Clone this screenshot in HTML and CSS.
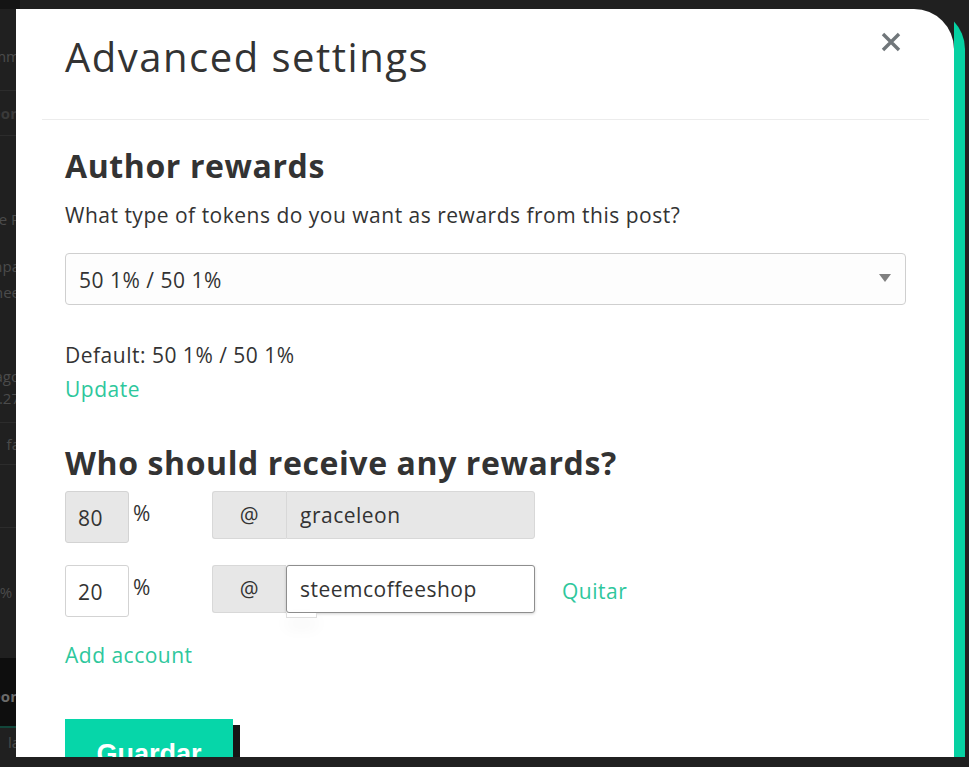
FILE: index.html
```html
<!DOCTYPE html>
<html lang="en">

<head>
    <meta charset="UTF-8">
    <meta name="viewport" content="width=device-width, initial-scale=1.0">
    <title>Advanced settings</title>
    <link rel="stylesheet" href="styles.css">
</head>

<body>
    <!-- page behind the modal, only a sliver of it shows on the left -->
    <div class="page">
        <div class="page-top"></div>
        <div class="page-row row-a"><span>Comm</span></div>
        <div class="page-row row-b"><span class="strong">Don</span></div>
        <div class="page-row row-c">
            <span class="l1">the P</span>
            <span class="l2">compa</span>
            <span class="l3">steemee</span>
            <span class="l4">ago</span>
            <span class="l5">1.27</span>
        </div>
        <div class="page-row row-d"><span>fa</span></div>
        <div class="page-row row-e"></div>
        <div class="page-row row-f"><span>50% ,</span></div>
        <div class="page-row row-g"><span class="strong">Don</span></div>
        <div class="page-row row-h"><span>la</span></div>
    </div>

    <div class="overlay">
        <div class="modal">
            <button class="close-btn" aria-label="Close">
                <svg width="22" height="20" viewBox="0 0 22 20">
                    <path d="M3 2 L19 18 M19 2 L3 18" stroke="#70767a" stroke-width="3.4" fill="none" />
                </svg>
            </button>

            <div class="modal-header">
                <h1>Advanced settings</h1>
            </div>

            <div class="modal-body">
                <h2>Author rewards</h2>
                <p class="hint">What type of tokens do you want as rewards from this post?</p>

                <div class="select-wrap">
                    <select class="payout-select">
                        <option>50 1% / 50 1%</option>
                    </select>
                </div>

                <p class="default-line">Default: 50 1% / 50 1%</p>
                <a href="#" class="link update-link">Update</a>

                <h2 class="beneficiaries-title">Who should receive any rewards?</h2>

                <div class="beneficiary-row">
                    <div class="percent-cell">
                        <input class="percent-input" type="text" value="80" disabled>
                        <span class="percent-sign">%</span>
                    </div>
                    <div class="account-group">
                        <span class="addon">@</span>
                        <input class="account-input" type="text" value="graceleon" disabled>
                    </div>
                </div>

                <div class="beneficiary-row">
                    <div class="percent-cell">
                        <input class="percent-input" type="text" value="20">
                        <span class="percent-sign">%</span>
                    </div>
                    <div class="account-group">
                        <span class="addon">@</span>
                        <input class="account-input focused" type="text" value="steemcoffeeshop">
                        <span class="suggest-stub"></span>
                    </div>
                    <a href="#" class="link remove-link">Quitar</a>
                </div>

                <a href="#" class="link add-link">Add account</a>

                <button class="save-btn">Guardar</button>
            </div>
        </div>
    </div>
</body>

</html>
```

FILE: styles.css
```css
body {
    margin: 0;
    height: 767px;
    overflow: hidden;
    background: #202020;
    font-family: "Open Sans", "Noto Sans", sans-serif;
    color: #333;
}

/* page behind */
.page {
    width: 20px;
    color: #4b4b4b;
    font-size: 15px;
    line-height: 18px;
}

.page-top {
    height: 9px;
    background: #141414;
}

.page-row {
    display: flex;
    flex-direction: column;
    align-items: flex-end;
    white-space: nowrap;
    border-bottom: 1px solid #2c2c2c;
    box-sizing: border-box;
}

.page-row .strong {
    font-weight: bold;
    color: #3a3a3a;
}

.row-a {
    height: 82px;
    padding-top: 38px;
}

.row-b {
    height: 45px;
    padding-top: 13px;
}

.row-c {
    height: 287px;
    padding-top: 74px;
}

.row-c .l2 {
    margin-top: 29px;
}

.row-c .l3 {
    margin-top: 8px;
}

.row-c .l4 {
    margin-top: 66px;
}

.row-c .l5 {
    margin-top: 4px;
}

.row-d {
    height: 42px;
    padding-top: 12px;
}

.row-e {
    height: 63px;
}

.row-f {
    height: 130px;
    padding-top: 55px;
    border-bottom: none;
}

.row-g {
    height: 70px;
    padding-top: 29px;
    background: #0e0e0e;
    border-bottom: 2px solid #12463a;
}

.row-g .strong {
    color: #6a6a6a;
}

.row-h {
    height: 27px;
    padding-top: 5px;
    border-bottom: none;
}

/* modal */
.overlay {
    position: fixed;
    top: 9px;
    left: 16px;
    right: 0;
    height: 748px;
    overflow: hidden;
}

.modal {
    position: relative;
    width: 938px;
    min-height: 820px;
    background: #fff;
    border-radius: 0 40px 0 0;
}

/* teal edge peeking out from behind the right side */
.modal::before {
    content: "";
    position: absolute;
    top: 0;
    left: 11px;
    width: 100%;
    height: 100%;
    background: #06d1a2;
    border-radius: 0 40px 0 0;
    clip-path: inset(0 0 0 927px);
}

.close-btn {
    position: absolute;
    top: 23px;
    right: 52px;
    padding: 0;
    border: none;
    background: none;
    cursor: pointer;
    line-height: 0;
}

.modal-header {
    margin: 0 25px 0 26px;
    padding: 24px 0 38px 23px;
    border-bottom: 1px solid #ececec;
}

h1 {
    margin: 0;
    font-size: 40px;
    line-height: 48px;
    font-weight: normal;
    letter-spacing: 1.5px;
    color: #333;
}

.modal-body {
    padding: 0 48px 0 49px;
    font-size: 21px;
    line-height: 30px;
    letter-spacing: 0.5px;
}

h2 {
    margin: 28px 0 0;
    font-size: 32px;
    line-height: 36px;
    font-weight: bold;
    letter-spacing: 0.6px;
    color: #333;
}

.hint {
    margin: 16px 0 0;
}

.select-wrap {
    position: relative;
    margin-top: 23px;
}

.select-wrap::after {
    content: "";
    position: absolute;
    right: 15px;
    top: 21px;
    border-left: 6px solid transparent;
    border-right: 6px solid transparent;
    border-top: 8px solid #808080;
}

.payout-select {
    width: 100%;
    height: 52px;
    padding: 2px 13px 0;
    border: 1px solid #cfcfcf;
    border-radius: 4px;
    background: #fdfdfd;
    font-family: inherit;
    font-size: 21px;
    letter-spacing: 0.5px;
    color: #333;
    appearance: none;
    -webkit-appearance: none;
}

.default-line {
    margin: 35px 0 0;
}

.link {
    color: #2ec79c;
    text-decoration: none;
}

.update-link {
    display: block;
    margin-top: 4px;
}

.beneficiaries-title {
    margin-top: 41px;
}

.beneficiary-row {
    display: flex;
    align-items: flex-start;
    margin-top: 22px;
}

.beneficiaries-title + .beneficiary-row {
    margin-top: 10px;
}

.percent-cell {
    display: flex;
    flex-shrink: 0;
    width: 147px;
}

input {
    box-sizing: border-box;
    font-family: inherit;
    font-size: 21px;
    letter-spacing: 0.5px;
    color: #333;
    -webkit-text-fill-color: #333;
    outline: none;
}

.percent-input {
    width: 64px;
    height: 52px;
    padding: 2px 12px 0;
    border: 1px solid #d3d3d3;
    border-radius: 3px;
    background: #fff;
}

.percent-input:disabled {
    background: #e7e7e7;
}

.percent-sign {
    margin: 7px 0 0 4px;
}

.account-group {
    position: relative;
    display: flex;
    flex-shrink: 0;
    width: 323px;
    height: 48px;
}

.addon {
    flex: 0 0 74px;
    box-sizing: border-box;
    display: flex;
    align-items: center;
    justify-content: center;
    background: #e7e7e7;
    border: 1px solid #d8d8d8;
    border-right: none;
    border-radius: 3px 0 0 3px;
}

.account-input {
    flex: 1 1 auto;
    min-width: 0;
    height: 48px;
    padding: 0 13px;
    border: 1px solid #d8d8d8;
    border-radius: 0 3px 3px 0;
    background: #fff;
}

.account-input:disabled {
    background: #e7e7e7;
}

.account-input.focused {
    border-color: #8e8e8e;
    border-radius: 3px;
    box-shadow: 0 1px 3px rgba(0, 0, 0, 0.18);
}

.suggest-stub {
    position: absolute;
    left: 74px;
    top: 48px;
    width: 31px;
    height: 5px;
    box-sizing: border-box;
    background: #fff;
    border: 1px solid #dedede;
    border-top: none;
    box-shadow: 0 8px 16px rgba(0, 0, 0, 0.08);
}

.remove-link {
    align-self: center;
    margin-left: 27px;
}

.add-link {
    display: block;
    margin-top: 23px;
}

.save-btn {
    display: block;
    width: 168px;
    margin-top: 49px;
    padding: 22px 0;
    border: none;
    background: #06d6a9;
    box-shadow: 7px 6px 0 #161616;
    color: #fff;
    font-family: "Liberation Sans", Arial, sans-serif;
    font-size: 27px;
    line-height: 27px;
    font-weight: bold;
    cursor: pointer;
}
```
